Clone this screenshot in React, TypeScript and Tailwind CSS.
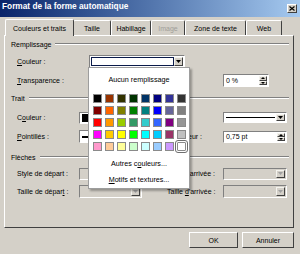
import React from "react";
import clsx from "clsx";

const swatches = [
  ["#000000", "#993300", "#333300", "#003300", "#003366", "#000080", "#333399", "#333333"],
  ["#800000", "#ff6600", "#808000", "#008000", "#008080", "#0000ff", "#666699", "#808080"],
  ["#ff0000", "#ff9900", "#99cc00", "#339966", "#33cccc", "#3366ff", "#800080", "#969696"],
  ["#ff00ff", "#ffcc00", "#ffff00", "#00ff00", "#00ffff", "#00ccff", "#993366", "#c0c0c0"],
  ["#ff99cc", "#ffcc99", "#ffff99", "#ccffcc", "#ccffff", "#99ccff", "#cc99ff", "#ffffff"],
];

function Arrow({ disabled }: { disabled?: boolean }) {
  return (
    <div className="flex h-full w-[9px] shrink-0 items-center justify-center border border-t-[#f4f3ee] border-l-[#f4f3ee] border-b-[#404040] border-r-[#404040] bg-[#d4d0c8]">
      <svg width="5" height="3" viewBox="0 0 5 3">
        <path d="M0 0h5L2.5 3z" fill={disabled ? "#a0a0a0" : "#000"} />
      </svg>
    </div>
  );
}

function Combo({
  className,
  children,
  disabled,
  focused,
}: {
  className?: string;
  children?: React.ReactNode;
  disabled?: boolean;
  focused?: boolean;
}) {
  return (
    <div
      className={clsx(
        "flex border border-t-[#808080] border-l-[#808080] border-b-white border-r-white p-px",
        disabled ? "bg-[#d4d0c8]" : "bg-white",
        className
      )}
    >
      <div
        className={clsx(
          "flex min-w-0 flex-1 items-center",
          focused && "border-[1.5px] border-[#0a1a4a] bg-white"
        )}
      >
        {children}
      </div>
      <Arrow disabled={disabled} />
    </div>
  );
}

function Spin({ className, value }: { className?: string; value: string }) {
  return (
    <div className={clsx("flex border border-t-[#808080] border-l-[#808080] border-b-white border-r-white bg-white p-px", className)}>
      <div className="flex flex-1 items-center pl-px text-[7px] leading-none text-black">{value}</div>
      <div className="flex w-[8px] flex-col">
        <div className="flex flex-1 items-center justify-center border border-t-[#f4f3ee] border-l-[#f4f3ee] border-b-[#404040] border-r-[#404040] bg-[#d4d0c8]">
          <svg width="4" height="2" viewBox="0 0 4 2">
            <path d="M0 2h4L2 0z" fill="#000" />
          </svg>
        </div>
        <div className="flex flex-1 items-center justify-center border border-t-[#f4f3ee] border-l-[#f4f3ee] border-b-[#404040] border-r-[#404040] bg-[#d4d0c8]">
          <svg width="4" height="2" viewBox="0 0 4 2">
            <path d="M0 0h4L2 2z" fill="#000" />
          </svg>
        </div>
      </div>
    </div>
  );
}

function Group({ label }: { label: string }) {
  return (
    <div className="flex h-[12px] items-center pl-[6px] pr-[4px]">
      <span className="text-[7px] leading-none text-black">{label}</span>
      <div className="ml-[4px] flex-1 border-t border-t-[#808080] border-b border-b-white" />
    </div>
  );
}

function Label({ className, children }: { className?: string; children: React.ReactNode }) {
  return <div className={clsx("shrink-0 text-[7px] leading-none text-black", className)}>{children}</div>;
}

function Tab({ label, width, selected, disabled }: { label: string; width: string; selected?: boolean; disabled?: boolean }) {
  return (
    <div
      className={clsx(
        "relative flex items-center justify-center rounded-t-[2px] border-t border-l border-r border-t-white border-l-white border-r-[#404040] bg-[#d4d0c8] text-[7px] leading-none",
        width,
        selected ? "z-10 -mb-px h-[17px] -mr-[1px]" : "h-[15px]",
        disabled ? "text-[#a09e98]" : "text-black"
      )}
    >
      {label}
    </div>
  );
}

export default function App() {
  return (
    <div className="relative h-[254px] w-[300px] overflow-hidden bg-[#d4d0c8] font-['Liberation_Sans',Arial,sans-serif]">
      {/* Title bar */}
      <div className="relative flex h-[17px] items-start bg-gradient-to-r from-[#0a246a] to-[#a6caf0] pl-[2px] pt-[2px]">
        <span className="text-[8.3px] font-bold leading-none text-white">Format de la forme automatique</span>
        <div className="absolute right-[3px] top-[4px] flex h-[9px] w-[10px] items-center justify-center border border-t-white border-l-white border-b-[#404040] border-r-[#404040] bg-[#d4d0c8]">
          <svg width="6" height="5" viewBox="0 0 6 5">
            <path d="M0.5 0.5L5.5 4.5M5.5 0.5L0.5 4.5" stroke="#000" strokeWidth="1.2" />
          </svg>
        </div>
      </div>

      {/* Tabs */}
      <div className="mt-[2px] flex h-[16px] items-end pl-[5px]">
        <Tab label="Couleurs et traits" width="w-[69px]" selected />
        <Tab label="Taille" width="w-[38px]" />
        <Tab label="Habillage" width="w-[40px]" />
        <Tab label="Image" width="w-[34px]" disabled />
        <Tab label="Zone de texte" width="w-[61px]" />
        <Tab label="Web" width="w-[36px]" />
      </div>

      {/* Panel */}
      <div className="ml-[4px] flex h-[193px] w-[290px] flex-col border border-t-white border-l-white border-r-[#404040] border-b-[#404040] pt-[2px]">
        <Group label="Remplissage" />

        <div className="mt-[5px] flex h-[13px] items-center pl-[12px]">
          <Label className="w-[72px]">
            <span className="underline">C</span>ouleur :
          </Label>
          <Combo className="h-[13px] w-[96px]" focused />
        </div>

        <div className="mt-[6px] flex h-[13px] items-center pl-[12px]">
          <Label className="w-[206px]">
            <span className="underline">T</span>ransparence :
          </Label>
          <Spin className="h-[13px] w-[46px]" value="0 %" />
        </div>

        <div className="mt-[5px]">
          <Group label="Trait" />
        </div>

        <div className="mt-[7px] flex h-[13px] items-center pl-[12px]">
          <Label className="w-[62px]">
            C<span className="underline">o</span>uleur :
          </Label>
          <Combo className="h-[12px] w-[63px]">
            <div className="ml-px h-[8px] w-[9px] bg-black" />
          </Combo>
          <Label className="ml-[25px] w-[56px]">Style :</Label>
          <Combo className="h-[11px] w-[64px]">
            <div className="mx-px h-px flex-1 bg-black" />
          </Combo>
        </div>

        <div className="mt-[6px] flex h-[13px] items-center pl-[12px]">
          <Label className="w-[62px]">
            <span className="underline">P</span>ointillés :
          </Label>
          <Combo className="h-[13px] w-[63px]">
            <div className="mx-px h-[2px] flex-1 bg-black" />
          </Combo>
          <Label className="ml-[25px] w-[56px]">Épaisseur :</Label>
          <Spin className="h-[12px] w-[64px]" value="0,75 pt" />
        </div>

        <div className="mt-[8px]">
          <Group label="Flèches" />
        </div>

        <div className="mt-[4px] flex h-[13px] items-center pl-[12px]">
          <Label className="w-[62px]">Style de départ :</Label>
          <Combo className="h-[12px] w-[63px]" disabled />
          <Label className="ml-[25px] w-[56px]">
            Style <span className="underline">d</span>'arrivée :
          </Label>
          <Combo className="h-[12px] w-[64px]" disabled />
        </div>

        <div className="mt-[5px] flex h-[13px] items-center pl-[12px]">
          <Label className="w-[62px]">
            Taille de dépar<span className="underline">t</span> :
          </Label>
          <Combo className="h-[13px] w-[63px]" disabled />
          <Label className="ml-[25px] w-[56px]">
            Taille <span className="underline">d</span>'arrivée :
          </Label>
          <Combo className="h-[13px] w-[64px]" disabled />
        </div>
      </div>

      {/* Buttons */}
      <div className="mt-[4px] flex justify-end gap-[4px] pr-[6px]">
        <button className="flex h-[16px] w-[49px] items-center justify-center border border-t-white border-l-white border-b-[#404040] border-r-[#404040] bg-[#d4d0c8] text-[7px] leading-none text-black">
          OK
        </button>
        <button className="flex h-[16px] w-[52px] items-center justify-center border border-t-white border-l-white border-b-[#404040] border-r-[#404040] bg-[#d4d0c8] text-[7px] leading-none text-black">
          Annuler
        </button>
      </div>

      {/* Colour popup */}
      <div className="absolute left-[88px] top-[67px] flex h-[122px] w-[102px] flex-col items-center border border-[#9d9d9d] bg-white shadow-[2px_2px_2px_rgba(0,0,0,0.3)]">
        <div className="mt-[6px] flex h-[11px] items-center text-[7.2px] leading-none text-black">Aucun remplissage</div>
        <div className="mt-[9px] grid grid-cols-[repeat(8,9px)] gap-[3px]">
          {swatches.flat().map((c, i) => (
            <div
              key={i}
              className={clsx(
                "h-[9px] w-[9px] border border-[#8a8a8a]",
                i === 39 && "outline-[1.5px] outline-offset-1 outline-[#6e6e6e] outline-solid rounded-[1px]"
              )}
              style={{ background: c }}
            />
          ))}
        </div>
        <div className="mt-[7px] flex h-[11px] items-center text-[7.2px] leading-none text-black">
          Autres c<span className="underline">o</span>uleurs...
        </div>
        <div className="mt-[5px] flex h-[11px] items-center text-[7.2px] leading-none text-black">
          <span className="underline">M</span>otifs et textures...
        </div>
      </div>
    </div>
  );
}
